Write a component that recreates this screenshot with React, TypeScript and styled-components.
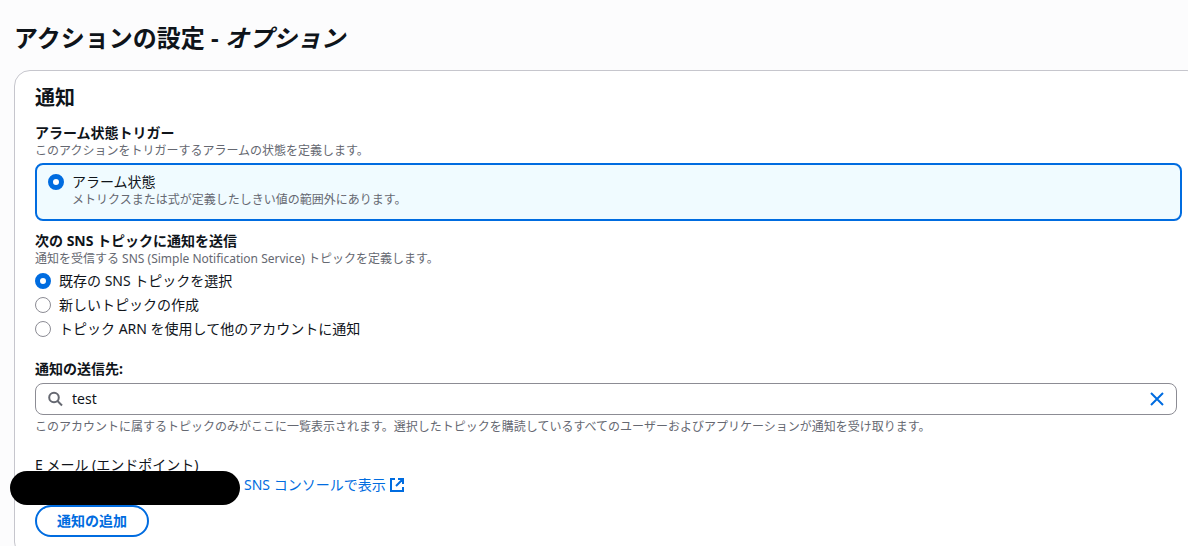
import React, { useState } from "react";
import styled, { createGlobalStyle } from "styled-components";

const blue = "#006ce0";
const ink = "#0f141a";
const muted = "#656871";

const GlobalStyle = createGlobalStyle`
  *, *::before, *::after { box-sizing: border-box; }
  body {
    margin: 0;
    background: #fcfcfd;
    color: ${ink};
    font: 14px/20px "Noto Sans", "Noto Sans CJK JP", sans-serif;
  }
`;

const Page = styled.main`
  height: 100vh;
  overflow: hidden;
  padding: 23px 0 0 14px;
`;

const Title = styled.h1`
  margin: 0 0 17px;
  font-size: 24px;
  line-height: 30px;
  font-weight: 700;
`;

const Card = styled.section`
  margin-right: -15px;
  padding: 15px 20px 20px;
  background: #fff;
  border: 1px solid #c6c6cd;
  border-radius: 16px;
`;

const CardTitle = styled.h2`
  margin: 0 0 13px;
  font-size: 20px;
  line-height: 24px;
  font-weight: 700;
`;

const Group = styled.fieldset<{ $gap: number }>`
  min-width: 0;
  margin: 0 0 ${(p) => p.$gap}px;
  padding: 0;
  border: 0;
`;

const Legend = styled.legend`
  display: block;
  padding: 0;
  font-weight: 700;
`;

const FieldLabel = styled.label`
  display: block;
  padding-bottom: 4px;
  font-weight: 700;
`;

const Hint = styled.span`
  display: block;
  color: ${muted};
  font-size: 12px;
  line-height: 16px;
`;

const Tile = styled.label`
  display: flex;
  align-items: flex-start;
  gap: 8px;
  margin-top: 4px;
  padding: 7px 11px 11px;
  background: #f0fbff;
  border: 2px solid ${blue};
  border-radius: 8px;
`;

const Radio = styled.input.attrs({ type: "radio" })`
  appearance: none;
  flex: none;
  width: 16px;
  height: 16px;
  margin: 2px 0;
  background: #fff;
  border: 1px solid #8c8c94;
  border-radius: 50%;
  &:checked {
    border: 5px solid ${blue};
  }
`;

const RadioList = styled.div`
  display: grid;
  gap: 4px;
  padding: 4px 0 2px;
`;

const RadioRow = styled.label`
  display: flex;
  gap: 8px;
`;

const Field = styled.div`
  margin: 0 5px 20px 0;
`;

const SearchBox = styled.div`
  display: flex;
  align-items: center;
  gap: 8px;
  height: 32px;
  margin-bottom: 4px;
  padding: 0 11px 0 12px;
  background: #fff;
  border: 1px solid #8c8c94;
  border-radius: 8px;
`;

const SearchInput = styled.input`
  flex: 1;
  min-width: 0;
  padding: 0;
  border: 0;
  outline: 0;
  background: none;
  color: ${ink};
  font: inherit;
`;

const IconButton = styled.button`
  display: flex;
  padding: 0;
  border: 0;
  background: none;
  color: ${blue};
`;

const Icon = styled.svg`
  flex: none;
  width: 16px;
  height: 16px;
  fill: none;
  stroke: currentColor;
  stroke-width: 2;
`;

const SearchIcon = styled(Icon)`
  color: ${muted};
`;

const EndpointRow = styled.div`
  display: flex;
  align-items: center;
  gap: 4px;
  height: 20px;
  margin: 0 0 10px -25px;
`;

const Redaction = styled.span`
  flex: none;
  position: relative;
  top: 3px;
  width: 230px;
  height: 34px;
  background: #000;
  border-radius: 17px;
`;

const ExternalLink = styled.a`
  display: inline-flex;
  align-items: center;
  gap: 3px;
  color: ${blue};
  text-decoration: none;
`;

const AddButton = styled.button`
  display: block;
  height: 32px;
  padding: 0 20px;
  background: #fff;
  border: 2px solid ${blue};
  border-radius: 16px;
  color: ${blue};
  font: inherit;
  font-weight: 700;
`;

const topicOptions = [
  "既存の SNS トピックを選択",
  "新しいトピックの作成",
  "トピック ARN を使用して他のアカウントに通知",
];

export default function App() {
  const [topic, setTopic] = useState(0);
  const [query, setQuery] = useState("test");

  return (
    <>
      <GlobalStyle />
      <Page lang="ja">
        <Title>
          アクションの設定 - <em>オプション</em>
        </Title>
        <Card>
          <CardTitle>通知</CardTitle>

          <Group $gap={10}>
            <Legend>アラーム状態トリガー</Legend>
            <Hint>このアクションをトリガーするアラームの状態を定義します。</Hint>
            <Tile>
              <Radio name="state" defaultChecked />
              <span>
                アラーム状態
                <Hint>メトリクスまたは式が定義したしきい値の範囲外にあります。</Hint>
              </span>
            </Tile>
          </Group>

          <Group $gap={18}>
            <Legend>次の SNS トピックに通知を送信</Legend>
            <Hint>通知を受信する SNS (Simple Notification Service) トピックを定義します。</Hint>
            <RadioList>
              {topicOptions.map((label, i) => (
                <RadioRow key={label}>
                  <Radio name="topic" checked={topic === i} onChange={() => setTopic(i)} />
                  {label}
                </RadioRow>
              ))}
            </RadioList>
          </Group>

          <Field>
            <FieldLabel htmlFor="destination">通知の送信先:</FieldLabel>
            <SearchBox>
              <SearchIcon viewBox="0 0 16 16" aria-hidden="true">
                <circle cx="6" cy="6.5" r="4.8" />
                <path d="M9.5 10 14 14.5" />
              </SearchIcon>
              <SearchInput id="destination" value={query} onChange={(e) => setQuery(e.target.value)} />
              <IconButton type="button" aria-label="クリア" onClick={() => setQuery("")}>
                <Icon viewBox="0 0 16 16" aria-hidden="true">
                  <path d="m2 2 12 12M14 2 2 14" />
                </Icon>
              </IconButton>
            </SearchBox>
            <Hint>
              このアカウントに属するトピックのみがここに一覧表示されます。選択したトピックを購読しているすべてのユーザーおよびアプリケーションが通知を受け取ります。
            </Hint>
          </Field>

          <div>E メール (エンドポイント)</div>
          <EndpointRow>
            <Redaction />
            <ExternalLink href="#sns">
              SNS コンソールで表示
              <Icon viewBox="0 0 16 16" aria-hidden="true">
                <path d="M6 2H2v12h12v-4M9 2h5v5M14 2 7 9" />
              </Icon>
            </ExternalLink>
          </EndpointRow>
          <AddButton type="button">通知の追加</AddButton>
        </Card>
      </Page>
    </>
  );
}
